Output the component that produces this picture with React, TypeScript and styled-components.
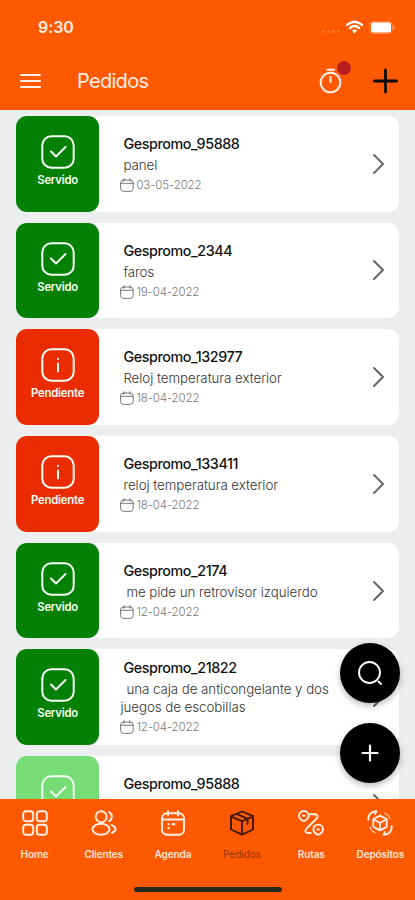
import React from 'react';
import styled, { createGlobalStyle } from 'styled-components';

const GlobalStyle = createGlobalStyle`
  * { box-sizing: border-box; }
  body { margin: 0; background: #ebedee; font-family: Inter, sans-serif; }
  svg { display: block; fill: none; stroke: currentColor; stroke-linecap: round; stroke-linejoin: round; flex: none; }
  button { border: 0; padding: 0; background: none; font: inherit; color: inherit; }
`;

const Screen = styled.main`
  position: relative;
  width: 415px;
  height: 900px;
  overflow: hidden;
  display: flex;
  flex-direction: column;
  background: #ebedee;
`;

const Header = styled.header`
  flex: none;
  height: 109.5px;
  background: #ff5900;
  color: #ffeee5;
`;

const StatusBar = styled.div`
  height: 54px;
  padding: 0 20px 0 38px;
  display: flex;
  align-items: center;
  justify-content: space-between;
`;

const Clock = styled.span`
  font-size: 16px;
  line-height: 20px;
  font-weight: 600;
  letter-spacing: -0.1px;
`;

const StatusIcons = styled.div`
  display: flex;
  align-items: center;
  gap: 6px;
  color: #fff;
`;

const Dots = styled.div`
  display: flex;
  gap: 2px;
  margin-top: 9px;
  span { width: 3px; height: 3px; border-radius: 50%; background: #ff7433; }
`;

const TitleBar = styled.div`
  height: 54px;
  padding: 0 16px 0 20px;
  display: flex;
  align-items: center;
`;

const Title = styled.h1`
  margin: 0 auto 0 36px;
  font-size: 20px;
  line-height: 26px;
  font-weight: 400;
  letter-spacing: -0.7px;
`;

const TimerButton = styled.button`
  position: relative;
  margin-right: 29px;
`;

const Badge = styled.span`
  position: absolute;
  width: 14px;
  height: 14px;
  left: 18px;
  top: -7px;
  border-radius: 50%;
  background: #b71d1d;
`;

const AddButton = styled.button`
  color: #0b0b0b;
`;

const List = styled.section`
  flex: 1;
  min-height: 0;
  overflow: hidden;
  padding: 6.5px 16px 0 16.4px;
  display: flex;
  flex-direction: column;
  gap: 11.2px;
`;

const Card = styled.article`
  flex: none;
  height: 95.5px;
  display: flex;
  align-items: center;
  border-radius: 11px;
  background: #fff;
`;

const Status = styled.div<{ $color: string }>`
  width: 82.5px;
  height: 100%;
  padding-top: 19px;
  display: flex;
  flex-direction: column;
  align-items: center;
  border-radius: 11px;
  background: ${p => p.$color};
  color: #f5fff5;
`;

const StatusLabel = styled.span`
  margin-top: 4px;
  font-size: 11.3px;
  line-height: 14px;
  font-weight: 600;
  letter-spacing: -0.2px;
`;

const Info = styled.div`
  flex: 1;
  padding: 1.6px 0 0 21.5px;
`;

const Reference = styled.h2`
  margin: 0;
  padding-left: 3px;
  font-size: 14.3px;
  line-height: 22px;
  font-weight: 500;
  letter-spacing: -0.4px;
  color: #111;
`;

const Description = styled.p<{ $indent: number }>`
  margin: 1px 0 0;
  width: 222px;
  font-size: 13.3px;
  line-height: 18px;
  font-weight: 300;
  letter-spacing: -0.04px;
  color: #333;
  text-indent: ${p => p.$indent}px;
`;

const DateLine = styled.div`
  height: 22px;
  display: flex;
  align-items: center;
  gap: 2px;
  font-size: 11.5px;
  font-weight: 300;
  letter-spacing: -0.12px;
  color: #777;
`;

const Chevron = styled.svg`
  margin-right: 14px;
  color: #666;
`;

const Actions = styled.div`
  position: absolute;
  right: 15.5px;
  top: 643px;
  display: flex;
  flex-direction: column;
  gap: 20px;
`;

const RoundButton = styled.button`
  width: 60px;
  height: 60px;
  display: grid;
  place-items: center;
  border-radius: 50%;
  background: #000;
  color: #fff;
  box-shadow: 0 3px 6px #0004;
`;

const Footer = styled.footer`
  flex: none;
  height: 101px;
  background: #ff5900;
`;

const Tabs = styled.nav`
  display: grid;
  grid-template-columns: repeat(6, 1fr);
`;

const Tab = styled.button<{ $active?: boolean }>`
  padding-top: 11px;
  display: flex;
  flex-direction: column;
  align-items: center;
  gap: 11px;
  color: ${p => (p.$active ? '#401900' : '#ffeee5')};
`;

const TabLabel = styled.span<{ $active?: boolean }>`
  font-size: 10px;
  line-height: 14px;
  font-weight: ${p => (p.$active ? 400 : 600)};
  letter-spacing: ${p => (p.$active ? '0' : '-0.1px')};
  color: ${p => (p.$active ? '#963400' : '#ffe6da')};
`;

const HomeIndicator = styled.div`
  width: 148px;
  height: 5px;
  margin: 25.5px 0 0 134px;
  border-radius: 3px;
  background: #292b23;
`;

type Order = { id: string; text: string; date: string; state: 'served' | 'pending' | 'faded'; indent?: number };

const orders: Order[] = [
  { id: 'Gespromo_95888', text: 'panel', date: '03-05-2022', state: 'served' },
  { id: 'Gespromo_2344', text: 'faros', date: '19-04-2022', state: 'served' },
  { id: 'Gespromo_132977', text: 'Reloj temperatura exterior', date: '18-04-2022', state: 'pending' },
  { id: 'Gespromo_133411', text: 'reloj temperatura exterior', date: '18-04-2022', state: 'pending' },
  { id: 'Gespromo_2174', text: 'me pide un retrovisor izquierdo', date: '12-04-2022', state: 'served', indent: 6 },
  { id: 'Gespromo_21822', text: 'una caja de anticongelante y dos juegos de escobillas', date: '12-04-2022', state: 'served', indent: 6 },
  { id: 'Gespromo_95888', text: '\u00a0', date: '', state: 'faded' },
];

const colors = { served: '#048004', pending: '#eb2c00', faded: '#76dc76' };

const StatusIcon = ({ pending }: { pending: boolean }) => (
  <svg width="34" height="34" viewBox="0 0 34 34" strokeWidth="2">
    <rect x="1.3" y="1.3" width="31.4" height="31.4" rx="9" />
    {pending ? <path d="M17 15.5v8M17 10.8v.2" /> : <path d="m10 16.5 5 5L24.5 12" />}
  </svg>
);

const CalendarIcon = () => (
  <svg width="14" height="14" viewBox="0 0 14 14" strokeWidth="1">
    <rect x=".6" y="2" width="12.6" height="11.4" rx="3" />
    <path d="M.6 5.3h12.6M4 .7v2.5M10 .7v2.5" />
  </svg>
);

const OrderCard = ({ order }: { order: Order }) => (
  <Card>
    <Status $color={colors[order.state]}>
      <StatusIcon pending={order.state === 'pending'} />
      {order.state !== 'faded' && <StatusLabel>{order.state === 'pending' ? 'Pendiente' : 'Servido'}</StatusLabel>}
    </Status>
    <Info>
      <Reference>{order.id}</Reference>
      <Description $indent={order.indent ?? 3}>{order.text}</Description>
      <DateLine><CalendarIcon />{order.date}</DateLine>
    </Info>
    <Chevron width="13" height="22" viewBox="0 0 13 22" strokeWidth="2"><path d="m2 2 9 9-9 9" /></Chevron>
  </Card>
);

const HomeIcon = () => (
  <>
    <rect x="1.2" y="1.2" width="10" height="10" rx="2.8" />
    <rect x="14.8" y="1.2" width="10" height="10" rx="2.8" />
    <rect x="1.2" y="14.8" width="10" height="10" rx="2.8" />
    <rect x="14.8" y="14.8" width="10" height="10" rx="2.8" />
  </>
);

const ClientsIcon = () => (
  <>
    <circle cx="10.2" cy="6.8" r="5.5" />
    <ellipse cx="10" cy="19.3" rx="8.4" ry="5.5" />
    <path d="M18 2.2a5 5 0 0 1 0 9M20.5 15.2c5.3 1.8 5.3 5.8.5 7.6" />
  </>
);

const AgendaIcon = () => (
  <>
    <rect x="2" y="3.2" width="22" height="21.5" rx="5" />
    <path d="M2 9.5h22M8 1v4.4M18 1v4.4" />
    <path d="M8.5 14.2h.2M12.8 14.2h1.5M8.5 18.2h.2" strokeWidth="2.2" />
  </>
);

const OrdersIcon = () => (
  <>
    <path d="M13 1.5 24 6.2v13.3L13 24.7 2 19.5V6.2z" />
    <path d="M2.3 6.7 13 11.2l10.7-4.5M13 11.2v13.2M7.5 3.9 18.5 8.7v5" />
  </>
);

const RoutesIcon = () => (
  <>
    <path d="M1 5.8a4.8 4.8 0 0 1 9.6 0c0 2.7-3.2 5.2-4.8 5.2S1 8.5 1 5.8z" />
    <path d="M15.4 19.4a4.8 4.8 0 0 1 9.6 0c0 2.7-3.2 5.2-4.8 5.2s-4.8-2.5-4.8-5.2z" />
    <path d="M5 5.7h1.6M19.4 19.4h1.6M12 4.2h5q4.5.8 1.5 4.5L9 18q-3.5 4.2.5 5h3.2" />
  </>
);

const DepotsIcon = () => (
  <>
    <path d="m13 5.7 6.7 3.5v7.6L13 20.3l-6.7-3.5V9.2zM6.8 9.5 13 13l6.2-3.5M13 13v7" />
    <path d="M1.2 9.8C1.2 4.5 4.2 1.5 9.5 1.2L8.2 3.8M24.8 16.2c0 5.3-3 8.3-8.3 8.6l1.3-2.6" />
    <path d="M17.8 3.2q4.3 1.4 5.4 5.5M8.2 22.8q-4.3-1.4-5.4-5.5" strokeWidth="1" />
  </>
);

const tabs = [
  { label: 'Home', Icon: HomeIcon },
  { label: 'Clientes', Icon: ClientsIcon },
  { label: 'Agenda', Icon: AgendaIcon },
  { label: 'Pedidos', Icon: OrdersIcon, active: true },
  { label: 'Rutas', Icon: RoutesIcon },
  { label: 'Depósitos', Icon: DepotsIcon },
];

export default function App() {
  return (
    <Screen>
      <GlobalStyle />
      <Header>
        <StatusBar>
          <Clock>9:30</Clock>
          <StatusIcons>
            <Dots><span /><span /><span /><span /></Dots>
            <svg width="17" height="14" viewBox="0 0 17 14" strokeWidth="2.4" strokeLinecap="butt">
              <path d="M1 4.9q7.5-6.5 15 0M4 8q4.5-3.8 9 0" />
              <path d="m6 10.5 2.5 3 2.5-3q-2.5-2-5 0" fill="currentColor" stroke="none" />
            </svg>
            <svg width="26" height="13" viewBox="0 0 26 13">
              <rect x=".7" y=".7" width="22.6" height="11.6" rx="3.5" stroke="#ff8b4d" />
              <rect x="2" y="1.5" width="20" height="10" rx="2" fill="currentColor" stroke="none" />
              <path d="M25 5v3" stroke="#ffad80" />
            </svg>
          </StatusIcons>
        </StatusBar>
        <TitleBar>
          <svg width="21" height="16" viewBox="0 0 21 16" strokeWidth="2"><path d="M1 2h19M1 8h19M1 14h19" /></svg>
          <Title>Pedidos</Title>
          <TimerButton aria-label="Temporizador">
            <svg width="24" height="26" viewBox="0 0 24 26" strokeWidth="2">
              <circle cx="11.5" cy="14.5" r="9.8" />
              <path d="M8 1.8h7M11.5 9v5" />
            </svg>
            <Badge />
          </TimerButton>
          <AddButton aria-label="Nuevo">
            <svg width="27" height="27" viewBox="0 0 27 27" strokeWidth="2.8"><path d="M13.5 2v22M2.5 13h22" /></svg>
          </AddButton>
        </TitleBar>
      </Header>
      <List>
        {orders.map((order, i) => <OrderCard key={i} order={order} />)}
      </List>
      <Footer>
        <Tabs>
          {tabs.map(({ label, Icon, active }) => (
            <Tab key={label} $active={active}>
              <svg width="26" height="26" viewBox="0 0 26 26" strokeWidth="1.9"><Icon /></svg>
              <TabLabel $active={active}>{label}</TabLabel>
            </Tab>
          ))}
        </Tabs>
        <HomeIndicator />
      </Footer>
      <Actions>
        <RoundButton aria-label="Buscar">
          <svg width="26" height="26" viewBox="0 0 26 26" strokeWidth="1.9"><circle cx="12.5" cy="12.5" r="10.5" /><path d="m21.5 21.5 2.5 2.5" /></svg>
        </RoundButton>
        <RoundButton aria-label="Añadir">
          <svg width="20" height="20" viewBox="0 0 20 20" strokeWidth="2.2"><path d="M10 2.5v15M2.5 10h15" /></svg>
        </RoundButton>
      </Actions>
    </Screen>
  );
}
